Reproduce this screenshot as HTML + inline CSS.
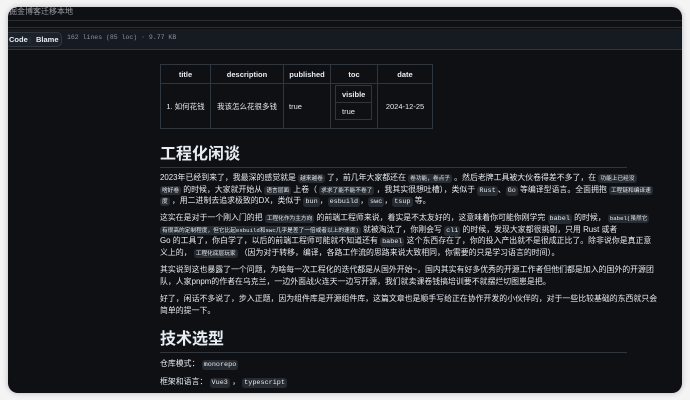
<!DOCTYPE html>
<html><head><meta charset="utf-8"><style>
*{margin:0;padding:0;box-sizing:border-box}
body{width:690px;height:400px;background:#f4f4f5;position:relative;overflow:hidden;font-family:"Liberation Sans","Noto Sans CJK SC",sans-serif;color:#e6edf3}
.win{position:absolute;left:8px;top:7px;width:674px;height:386px;background:#0f1014;border-radius:10px;overflow:hidden;box-shadow:0 0 6px rgba(0,0,0,.25)}
.t{position:absolute;left:1px;top:-1px;font-size:8px;color:#9aa0a8}
.l1{position:absolute;left:0;right:0;top:13px;height:1px;background:#2a2d33}
.l2{position:absolute;left:0;right:0;top:20px;height:1px;background:#2a2d33}
.bar{position:absolute;left:0;right:0;top:22px;height:21px;background:#161a21;border-bottom:1px solid #30363d}
.btn{position:absolute;left:-4px;top:3px;height:15px;width:58px;border:1px solid #30363d;border-radius:5px;background:#1d222a;font-size:7.5px;font-weight:bold;line-height:13px}
.btn span{position:absolute;top:0}
.meta{position:absolute;left:59px;top:5px;font:6.5px "Liberation Mono",monospace;color:#8b949e}
table{position:absolute;border-collapse:collapse;font-size:7.5px}
.main{left:152px;top:57px;width:273px;height:65px}
.main td,.main th{border:1px solid #30363d;text-align:center;padding:0}
.main th{height:19px;font-weight:bold}
.inner{position:absolute;left:327px;top:78px;width:37px;height:34px}
.inner td{border:1px solid #30363d;height:17px;padding-left:6px;text-align:left}
.c{position:absolute;left:152px;width:480px;font-size:7.9px;line-height:11.6px;color:#e6edf3;white-space:nowrap}
h2{position:absolute;left:152px;width:467px;font-size:16px;font-weight:bold;border-bottom:1px solid #30363d;padding-bottom:3px}
code{font-family:"Liberation Mono","Noto Sans CJK SC",monospace;background:#262a31;border-radius:3px;padding:1px 2px;font-size:6.8px;line-height:6px}
code.s{font-size:5.7px}
</style></head><body>
<div class="win">
<div class="t">掘金博客迁移本地</div>
<div class="l1"></div><div class="l2"></div>
<div class="bar"><div class="btn"><span style="left:4px">Code</span><span style="left:24px;color:#30363d">|</span><span style="left:31px">Blame</span></div><div class="meta">162 lines (85 loc) · 9.77 KB</div></div>
<table class="main"><tr><th style="width:50px">title</th><th style="width:73px">description</th><th style="width:47px">published</th><th style="width:47px">toc</th><th>date</th></tr>
<tr><td>1. 如何花钱</td><td>我该怎么花很多钱</td><td style="text-align:left;padding-left:5px">true</td><td></td><td>2024-12-25</td></tr></table>
<table class="inner"><tr><td style="font-weight:bold">visible</td></tr><tr><td>true</td></tr></table>
<h2 style="top:133px">工程化闲谈</h2>
<div class="c" style="top:165px">2023年已经到来了，我最深的感觉就是 <code class="s">越来越卷</code> 了，前几年大家都还在 <code class="s">卷功能，卷点子</code> 。然后老牌工具被大伙卷得差不多了，在 <code class="s">功能上已经没</code><br><code class="s">啥好卷</code> 的时候，大家就开始从 <code class="s">语言层面</code> 上卷（ <code class="s">求求了能不能不卷了</code> ，我其实很想吐槽），类似于 <code>Rust</code>、<code>Go</code> 等编译型语言。全面拥抱 <code class="s">工程链和编译速</code><br><code class="s">度</code> ，用二进制去追求极致的DX，类似于 <code>bun</code>，<code>esbuild</code>，<code>swc</code>，<code>tsup</code> 等。</div>
<div class="c" style="top:205px">这实在是对于一个刚入门的把 <code class="s">工程化作为主方向</code> 的前端工程师来说，着实是不太友好的，这意味着你可能你刚学完 <code>babel</code> 的时候， <code class="s">babel(虽然它</code><br><code class="s">有很高的定制程度，但它比起esbuild和swc几乎是差了一倍或者以上的速度)</code> 就被淘汰了，你刚会写 <code>cli</code> 的时候，发现大家都很挑剔，只用 Rust 或者<br>Go 的工具了，你白学了，以后的前端工程师可能就不知道还有 <code>babel</code> 这个东西存在了，你的投入产出就不是很成正比了。除非说你是真正意<br>义上的， <code class="s">工程化底层玩家</code> （因为对于转移，编译，各路工作流的思路来说大致相同，你需要的只是学习语言的时间）。</div>
<div class="c" style="top:257px">其实说到这也暴露了一个问题，为啥每一次工程化的迭代都是从国外开始~，国内其实有好多优秀的开源工作者但他们都是加入的国外的开源团<br>队，人家pnpm的作者在乌克兰，一边外面战火连天一边写开源，我们就卖课卷钱搞培训要不就摆烂切图崽是把。</div>
<div class="c" style="top:286px">好了，闲话不多说了，步入正题，因为组件库是开源组件库，这篇文章也是顺手写给正在协作开发的小伙伴的，对于一些比较基础的东西就只会<br>简单的提一下。</div>
<h2 style="top:318px">技术选型</h2>
<div class="c" style="top:351px">仓库模式： <code>monorepo</code></div>
<div class="c" style="top:369px">框架和语言： <code>Vue3</code> ， <code>typescript</code></div>
</div>
</body></html>
